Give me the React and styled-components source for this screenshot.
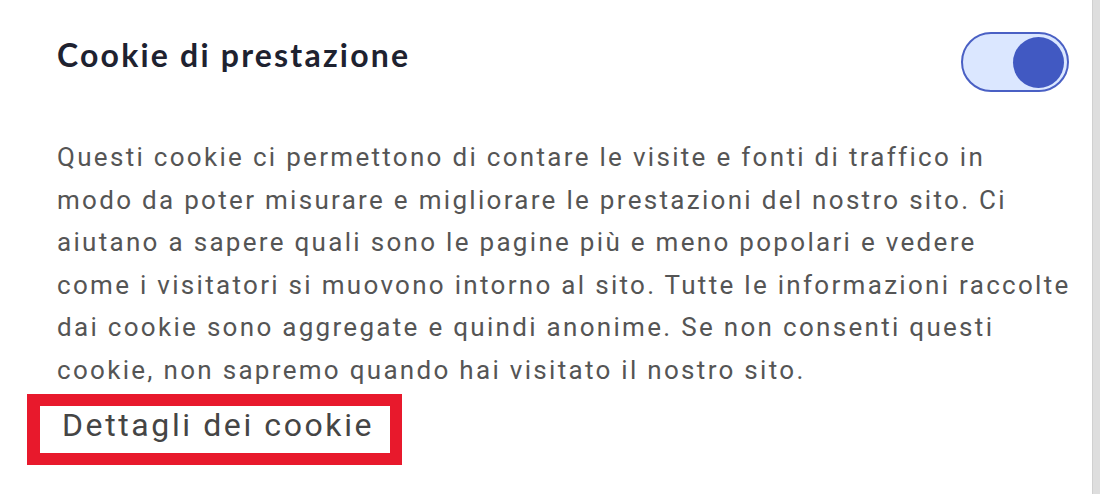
import React from "react";
import styled, { createGlobalStyle } from "styled-components";

const Global = createGlobalStyle`
  html, body { margin: 0; padding: 0; background: #ffffff; }
  body { width: 1100px; height: 494px; overflow: hidden; }
`;

const Page = styled.div`
  display: flex;
  width: 1100px;
  height: 494px;
  background: #ffffff;
`;

const Panel = styled.section`
  flex: 1;
  min-width: 0;
  padding: 31px 23px 0 57px;
  box-sizing: border-box;
`;

const Scrollbar = styled.div`
  width: 8px;
  height: 100%;
  background: #dedede;
  border-left: 1px solid #d0d0d0;
  box-sizing: border-box;
`;

const HeaderRow = styled.div`
  display: flex;
  align-items: flex-start;
  justify-content: space-between;
  height: 60px;
`;

const Title = styled.h2`
  margin: 5px 0 0;
  font-family: Lato, "Open Sans", sans-serif;
  font-weight: 700;
  font-size: 32px;
  line-height: 38px;
  letter-spacing: 2.2px;
  color: #1e2230;
`;

const Switch = styled.button`
  width: 108px;
  height: 60px;
  margin-top: 1px;
  border: 2px solid #4a60c4;
  border-radius: 30px;
  background: #dbe7ff;
  box-sizing: border-box;
  cursor: pointer;
  display: flex;
  align-items: center;
  justify-content: ${(p) => (p.$on ? "flex-end" : "flex-start")};
  padding: 0 3px;
`;

const Knob = styled.span`
  width: 51px;
  height: 51px;
  border-radius: 50%;
  background: #4159c2;
  box-shadow: 0 0 0 1.5px #dbe7ff;
`;

const Description = styled.p`
  margin: 45px 0 0;
  font-family: Roboto, "Liberation Sans", sans-serif;
  font-size: 26px;
  line-height: 42.5px;
  letter-spacing: 2.3px;
  color: #555555;
  white-space: nowrap;
`;

const Highlight = styled.div`
  display: inline-flex;
  margin: 3px 0 0 -30px;
  border: 12px solid #e8192c;
  border-left-width: 13px;
  padding: 1px 16px 0 22px;
  height: 71px;
  box-sizing: border-box;
  align-items: flex-start;
`;

const DetailsLink = styled.a`
  font-family: Roboto, "Liberation Sans", sans-serif;
  font-size: 32px;
  line-height: 37px;
  letter-spacing: 2.6px;
  color: #454545;
  text-decoration: none;
  cursor: pointer;
`;

const lines = [
  "Questi cookie ci permettono di contare le visite e fonti di traffico in",
  "modo da poter misurare e migliorare le prestazioni del nostro sito. Ci",
  "aiutano a sapere quali sono le pagine più e meno popolari e vedere",
  "come i visitatori si muovono intorno al sito. Tutte le informazioni raccolte",
  "dai cookie sono aggregate e quindi anonime. Se non consenti questi",
  "cookie, non sapremo quando hai visitato il nostro sito.",
];

export default function App() {
  return (
    <>
      <Global />
      <Page>
        <Panel>
          <HeaderRow>
            <Title>Cookie di prestazione</Title>
            <Switch $on role="switch" aria-checked="true">
              <Knob />
            </Switch>
          </HeaderRow>
          <Description>
            {lines.map((l, i) => (
              <React.Fragment key={i}>
                {l}
                {i < lines.length - 1 && <br />}
              </React.Fragment>
            ))}
          </Description>
          <Highlight>
            <DetailsLink>Dettagli dei cookie</DetailsLink>
          </Highlight>
        </Panel>
        <Scrollbar />
      </Page>
    </>
  );
}
